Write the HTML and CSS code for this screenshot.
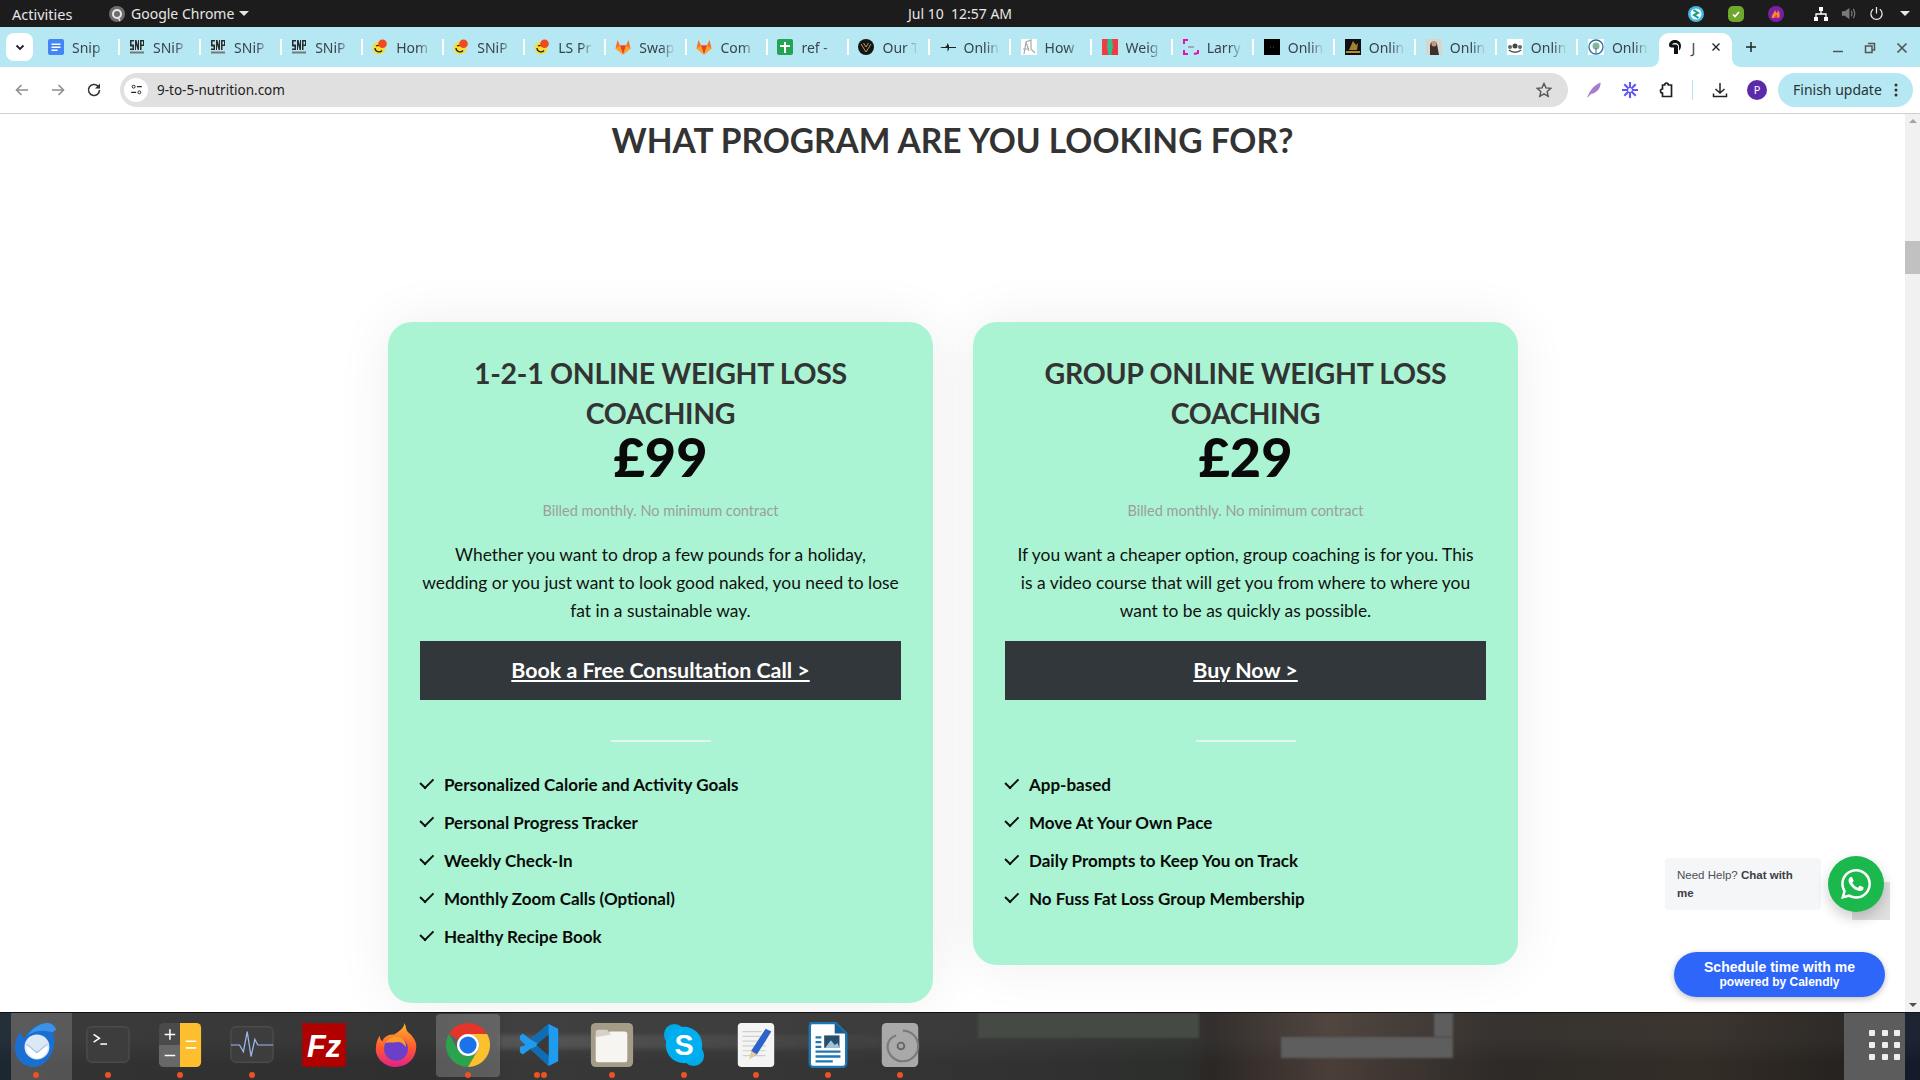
FILE: index.html
```html
<!DOCTYPE html>
<html lang="en">
<head>
<meta charset="utf-8">
<title>9 to 5 Nutrition</title>
<link rel="stylesheet" href="styles.css">
</head>
<body>
<svg class="sprite" width="0" height="0" aria-hidden="true">
  <symbol id="f-snip" viewBox="0 0 16 16"><rect width="16" height="16" fill="none"/><path d="M1 1h4v1.500H2.500v3H5V11H1V9.500h2.500v-2H1zM6 1h1.500l1.500 5V1h1v10H8.700L7 6v5H6zM11 1h4v6h-2.500v4H11zM12.500 2.500v3H14v-3z" fill="#2b2b2b"/><rect x="1" y="12.500" width="14" height="2" fill="#777"/></symbol>
  <symbol id="f-ls" viewBox="0 0 16 16"><circle cx="7" cy="9" r="6.500" fill="#f7dc3a"/><path d="M3 9a4 4 0 0 0 7 2.500M4 7c2-1 5-1 6 1" fill="none" stroke="#222" stroke-width="1.300"/><circle cx="10.500" cy="4.800" r="4.300" fill="#f2491e"/></symbol>
  <symbol id="f-gitlab" viewBox="0 0 16 16"><path d="M8 15.500 .5 9.500 2.500 1 5 6.500h6L13.500 1l2 8.500z" fill="#fc6d26"/><path d="M8 15.500 5 6.500h6z" fill="#e24329"/><path d="M8 15.500 .5 9.500 5 6.500zM8 15.500l7.500-6-4.500-3z" fill="#fca326"/></symbol>
  <symbol id="f-online" viewBox="0 0 16 16"><path d="M0 8h5l2-1.500V4l2 2.500V8h7v1H9v1.500l-1.500 2V9H5L2 9z" fill="#222"/></symbol>
</svg>

<div class="screen">
  <header class="topbar">
    <div class="top-left">
      <span class="activities">Activities</span>
      <svg class="app-glyph" viewBox="0 0 16 16"><circle cx="8" cy="8" r="8" fill="#6d6d6d"/><circle cx="8" cy="8" r="4" fill="none" stroke="#e8e8e8" stroke-width="2"/><path d="M9 11l2 4" stroke="#e8e8e8" stroke-width="1.500"/></svg>
      <span class="app-name">Google Chrome</span>
      <span class="caret"></span>
    </div>
    <div class="clock">Jul 10&nbsp;&nbsp;12:57 AM</div>
    <div class="tray">
      <svg class="tray-app" viewBox="0 0 16 16"><circle cx="8" cy="8" r="8" fill="#3fb6e8"/><circle cx="8" cy="8" r="5.500" fill="#fff"/><path d="M5.500 4 10 7 6 9l4.500 3" fill="none" stroke="#12a08a" stroke-width="2"/></svg>
      <svg class="tray-app" viewBox="0 0 16 16"><rect width="16" height="16" rx="5" fill="#6fa82c"/><path d="M5 8.500l2 2 4-4.500" fill="none" stroke="#fff" stroke-width="1.700"/></svg>
      <svg class="tray-app" viewBox="0 0 16 16"><circle cx="8" cy="8" r="8" fill="#7d1fa5"/><path d="M4 12c-1-3 2-4 3-8 1 2 1 3 2 3l1-3c2 3 2 6 1 8z" fill="#f2902a"/><path d="M6 12c0-2 2-2 2-4 1 1 2 2 2 4z" fill="#f23a6a"/></svg>
      <svg class="tray-net" viewBox="0 0 16 16"><path d="M6 1h4v4H6zM1 11h4v4H1zM11 11h4v4h-4z" fill="#fff"/><path d="M8 5v3M3 11V8h10v3" fill="none" stroke="#fff" stroke-width="1.300"/></svg>
      <svg class="tray-vol" viewBox="0 0 16 16"><path d="M1 5.500h3L9 2v12L4 10.500H1z" fill="#7a7a7a"/><path d="M11 5c1 2 1 4 0 6M13 3c2 3 2 7 0 10" fill="none" stroke="#7a7a7a" stroke-width="1.300"/></svg>
      <svg class="tray-pow" viewBox="0 0 16 16"><path d="M8 1v7M4.500 3.500a6 6 0 1 0 7 0" fill="none" stroke="#eee" stroke-width="1.300"/></svg>
      <span class="caret caret-tray"></span>
    </div>
  </header>

  <div class="tabstrip">
    <button class="tab-search"><svg viewBox="0 0 12 12"><path d="M2.500 4.500 6 8l3.500-3.500" fill="none" stroke="#222" stroke-width="1.800"/></svg></button>
    <div class="tabs">
      <div class="tab"><svg class="fav" viewBox="0 0 16 16"><rect width="16" height="16" rx="2" fill="#4285f4"/><path d="M3.500 4.500h9v1.500h-9zM3.500 7.500h9V9h-9zM3.500 10.500h6V12h-6z" fill="#fff"/></svg><span class="tab-label">Snip</span></div>
      <div class="tab"><svg class="fav"><use href="#f-snip"/></svg><span class="tab-label">SNiP</span></div>
      <div class="tab"><svg class="fav"><use href="#f-snip"/></svg><span class="tab-label">SNiP</span></div>
      <div class="tab"><svg class="fav"><use href="#f-snip"/></svg><span class="tab-label">SNiP</span></div>
      <div class="tab"><svg class="fav"><use href="#f-ls"/></svg><span class="tab-label">Hom</span></div>
      <div class="tab"><svg class="fav"><use href="#f-ls"/></svg><span class="tab-label">SNiP</span></div>
      <div class="tab"><svg class="fav"><use href="#f-ls"/></svg><span class="tab-label">LS Pr</span></div>
      <div class="tab"><svg class="fav"><use href="#f-gitlab"/></svg><span class="tab-label">Swap</span></div>
      <div class="tab"><svg class="fav"><use href="#f-gitlab"/></svg><span class="tab-label">Com</span></div>
      <div class="tab"><svg class="fav" viewBox="0 0 16 16"><rect width="16" height="16" rx="2" fill="#23a455"/><path d="M7 3h2v3h4v2H9v6H7V8H3V6h4z" fill="#fff"/></svg><span class="tab-label">ref -</span></div>
      <div class="tab"><svg class="fav" viewBox="0 0 16 16"><circle cx="8" cy="8" r="8" fill="#151515"/><path d="M3 5l5 8 5-8M5.500 4 8 8l2.500-4" fill="none" stroke="#b89a5a" stroke-width="1"/></svg><span class="tab-label">Our T</span></div>
      <div class="tab"><svg class="fav"><use href="#f-online"/></svg><span class="tab-label">Onlin</span></div>
      <div class="tab"><svg class="fav" viewBox="0 0 16 16"><rect width="16" height="16" fill="#fff"/><path d="M3 15 5 3l5-2v9l4 4M5 3l3 9M2 10h6" fill="none" stroke="#aaa" stroke-width="1.200"/></svg><span class="tab-label">How</span></div>
      <div class="tab"><svg class="fav" viewBox="0 0 16 16"><rect width="16" height="16" fill="#ee3b44"/><path d="M6 0h4l1 7-1.500 9h-3L5 7z" fill="#2fc08a"/></svg><span class="tab-label">Weig</span></div>
      <div class="tab"><svg class="fav" viewBox="0 0 16 16"><path d="M5 1H1v4M1 11v4h4M15 11v3l-4 1" fill="none" stroke="#e414b4" stroke-width="2"/><path d="M5 8h6" stroke="#9ab" stroke-width="2"/></svg><span class="tab-label">Larry</span></div>
      <div class="tab"><svg class="fav" viewBox="0 0 16 16"><rect width="16" height="16" fill="#000"/><path d="M6 8h1M9 8h1" stroke="#555"/></svg><span class="tab-label">Onlin</span></div>
      <div class="tab"><svg class="fav" viewBox="0 0 16 16"><rect width="16" height="16" fill="#111"/><path d="M4 11 8 2l3 4 2-2-1 7z" fill="#a5812f"/><rect x="1" y="12" width="14" height="2" fill="#b38d35"/></svg><span class="tab-label">Onlin</span></div>
      <div class="tab"><svg class="fav" viewBox="0 0 16 16"><rect width="16" height="16" fill="#d8d5cf"/><path d="M4 16V7c0-5 6-6 7-2l2 11z" fill="#3b302c"/><circle cx="8" cy="5" r="2.500" fill="#c59a80"/></svg><span class="tab-label">Onlin</span></div>
      <div class="tab"><svg class="fav" viewBox="0 0 16 16"><rect width="16" height="16" fill="#fff"/><circle cx="8" cy="7" r="2.500" fill="#444"/><circle cx="3" cy="8" r="2" fill="#666"/><circle cx="13" cy="8" r="2" fill="#666"/><path d="M2 11c3 3 9 3 12 0" fill="none" stroke="#555" stroke-width="1.500"/></svg><span class="tab-label">Onlin</span></div>
      <div class="tab tab-last"><svg class="fav" viewBox="0 0 16 16"><rect width="16" height="16" fill="#fff"/><circle cx="8" cy="8" r="7" fill="none" stroke="#2e6f9e" stroke-width="1.300"/><circle cx="8" cy="7" r="3.500" fill="#7fb59a"/><path d="M8 9v5" stroke="#2e6f9e"/></svg><span class="tab-label">Onlin</span></div>
      <div class="tab-active">
        <svg class="fav" viewBox="0 0 16 16"><path d="M7 15V8.500H4.500C3 8.500 2 7.500 2 6c0-3 3-5 6-5 3.500 0 6 2.500 6 6 0 2-1 3.500-2 4.500V8c0-2.500-1.500-4-4-4-1.500 0-3 .8-3 1.500h4c1 0 2 1 2 2V15z" fill="#111"/></svg>
        <span class="tab-label tab-label-active">J</span>
        <svg class="tab-close" viewBox="0 0 10 10"><path d="M1.500 1.500l7 7M8.500 1.500l-7 7" stroke="#222" stroke-width="1.300"/></svg>
      </div>
    </div>
    <svg class="newtab" viewBox="0 0 12 12"><path d="M6 1v10M1 6h10" stroke="#222" stroke-width="1.500"/></svg>
    <div class="winctl">
      <svg viewBox="0 0 12 12"><path d="M1 9.500h10" stroke="#555" stroke-width="1.500"/></svg>
      <svg viewBox="0 0 12 12"><path d="M4 1.500h6.500V8H8M1.500 4H8v6.500H1.500z" fill="none" stroke="#555" stroke-width="1.500"/></svg>
      <svg viewBox="0 0 12 12"><path d="M1.500 1.500l9 9M10.500 1.500l-9 9" stroke="#555" stroke-width="1.700"/></svg>
    </div>
  </div>

  <div class="toolbar">
    <svg class="nav nav-back" viewBox="0 0 16 16"><path d="M14 8H3M7.500 3 2.500 8l5 5" fill="none" stroke="#8f8f8f" stroke-width="1.600"/></svg>
    <svg class="nav" viewBox="0 0 16 16"><path d="M2 8h11M8.500 3l5 5-5 5" fill="none" stroke="#8f8f8f" stroke-width="1.600"/></svg>
    <svg class="nav" viewBox="0 0 16 16"><path d="M13.500 8a5.500 5.500 0 1 1-1.600-3.900L13.500 6" fill="none" stroke="#333" stroke-width="1.600"/><path d="M14 1.500V6.500H9z" fill="#333"/></svg>
    <div class="omnibox">
      <span class="site-info"><svg viewBox="0 0 16 16"><circle cx="4.500" cy="4.500" r="1.800" fill="none" stroke="#222" stroke-width="1.200"/><path d="M8.500 4.500h6M1.500 11.500h6" stroke="#222" stroke-width="1.400"/><circle cx="11.500" cy="11.500" r="1.800" fill="none" stroke="#222" stroke-width="1.200"/></svg></span>
      <span class="url">9-to-5-nutrition.com</span>
      <svg class="star" viewBox="0 0 16 16"><path d="M8 1.500l2 4.400 4.700.5-3.500 3.200 1 4.700L8 11.900l-4.200 2.400 1-4.700L1.300 6.400 6 5.900z" fill="none" stroke="#555" stroke-width="1.400"/></svg>
    </div>
    <svg class="ext ext-first" viewBox="0 0 16 16"><path d="M1 16C3 11 6 4 14.500 .5 15 6 11 11 5 12l-3 3z" fill="#a97cd0"/></svg>
    <svg class="ext" viewBox="0 0 16 16"><g stroke="#5f56f5" stroke-width="2.100"><path d="M8 0v16M0 8h16M2.300 2.300l11.400 11.400M13.700 2.300 2.300 13.700"/></g><circle cx="8" cy="8" r="2.500" fill="#fff" stroke="#5f56f5" stroke-width="1.200"/></svg>
    <svg class="ext" viewBox="0 0 16 16"><path d="M4.500 3h2.200a1.800 1.800 0 0 1 3.600 0h3.200v11.500h-9V11a2 2 0 0 1 0-4z" fill="none" stroke="#222" stroke-width="1.700"/></svg>
    <span class="tool-sep"></span>
    <svg class="ext ext-dl" viewBox="0 0 16 16"><path d="M8 1v10M3.500 7 8 11l4.500-4M1.500 11.500v3h13v-3" fill="none" stroke="#222" stroke-width="1.500"/></svg>
    <span class="avatar">P</span>
    <div class="update"><span>Finish update</span><svg viewBox="0 0 4 16"><circle cx="2" cy="3" r="1.500" fill="#333"/><circle cx="2" cy="8" r="1.500" fill="#333"/><circle cx="2" cy="13" r="1.500" fill="#333"/></svg></div>
  </div>

  <div class="viewport">
    <main class="page">
      <h2 class="page-title">WHAT PROGRAM ARE YOU LOOKING FOR?</h2>
      <div class="cards">
        <section class="card">
          <h3 class="card-title">1-2-1 ONLINE WEIGHT LOSS COACHING</h3>
          <div class="price">£99</div>
          <p class="billed">Billed monthly. No minimum contract</p>
          <p class="blurb">Whether you want to drop a few pounds for a holiday,<br>wedding or you just want to look good naked, you need to lose<br>fat in a sustainable way.</p>
          <a class="cta" href="#">Book a Free Consultation Call &gt;</a>
          <hr class="rule">
          <ul class="features">
            <li>Personalized Calorie and Activity Goals</li>
            <li>Personal Progress Tracker</li>
            <li>Weekly Check-In</li>
            <li>Monthly Zoom Calls (Optional)</li>
            <li>Healthy Recipe Book</li>
          </ul>
        </section>
        <section class="card">
          <h3 class="card-title">GROUP ONLINE WEIGHT LOSS COACHING</h3>
          <div class="price">£29</div>
          <p class="billed">Billed monthly. No minimum contract</p>
          <p class="blurb">If you want a cheaper option, group coaching is for you. This<br>is a video course that will get you from where to where you<br>want to be as quickly as possible.</p>
          <a class="cta" href="#">Buy Now &gt;</a>
          <hr class="rule">
          <ul class="features">
            <li>App-based</li>
            <li>Move At Your Own Pace</li>
            <li>Daily Prompts to Keep You on Track</li>
            <li>No Fuss Fat Loss Group Membership</li>
          </ul>
        </section>
      </div>
      <div class="help">Need Help? <b>Chat with</b><br><b>me</b></div>
      <div class="wa-square"></div>
      <div class="wa"><svg viewBox="0 0 24 24"><path fill="#fff" d="M17.472 14.382c-.297-.149-1.758-.867-2.03-.967-.273-.099-.471-.148-.67.15-.197.297-.767.966-.94 1.164-.173.199-.347.223-.644.075-.297-.15-1.255-.463-2.39-1.475-.883-.788-1.48-1.761-1.653-2.059-.173-.297-.018-.458.13-.606.134-.133.298-.347.446-.52.149-.174.198-.298.298-.497.099-.198.05-.371-.025-.52-.075-.149-.669-1.612-.916-2.207-.242-.579-.487-.5-.669-.51-.173-.008-.371-.01-.57-.01-.198 0-.52.074-.792.372-.272.297-1.04 1.016-1.04 2.479 0 1.462 1.065 2.875 1.213 3.074.149.198 2.096 3.2 5.077 4.487.709.306 1.262.489 1.694.625.712.227 1.36.195 1.871.118.571-.085 1.758-.719 2.006-1.413.248-.694.248-1.289.173-1.413-.074-.124-.272-.198-.57-.347m-5.421 7.403h-.004a9.87 9.87 0 01-5.031-1.378l-.361-.214-3.741.982.998-3.648-.235-.374a9.86 9.86 0 01-1.51-5.26c.001-5.45 4.436-9.884 9.888-9.884 2.64 0 5.122 1.03 6.988 2.898a9.825 9.825 0 012.893 6.994c-.003 5.45-4.437 9.884-9.885 9.884m8.413-18.297A11.815 11.815 0 0012.05 0C5.495 0 .16 5.335.157 11.892c0 2.096.547 4.142 1.588 5.945L.057 24l6.305-1.654a11.882 11.882 0 005.683 1.448h.005c6.554 0 11.89-5.335 11.893-11.893a11.821 11.821 0 00-3.48-8.413z"/></svg></div>
      <div class="calendly"><strong>Schedule time with me</strong><span>powered by Calendly</span></div>
    </main>
    <aside class="scrollbar">
      <span class="sb-arrow sb-up"></span>
      <span class="sb-track"><span class="sb-thumb"></span></span>
      <span class="sb-arrow sb-down"></span>
    </aside>
  </div>

  <footer class="dock">
    <div class="wall wall-l"></div>
    <div class="wall wall-top"></div>
    <div class="wall wall-h"></div>
    <div class="wall wall-v"></div>
    <div class="dock-item is-first">
      <svg class="dock-icon" viewBox="0 0 48 48"><path d="M36 1c4 0 8 3 9 7l-4 3c3 6 3 14 0 20-4 9-10 15-18 16C10 47 2 38 2 27c0-7 3-13 6-17 0 4 2 6 4 7C15 9 26 1 36 1z" fill="#1a6fd0"/><path d="M36 1c4 0 8 3 9 7l-4 3C34 8 24 8 15 14 20 7 28 1 36 1z" fill="#3a92ea"/><circle cx="25" cy="26" r="13" fill="#dbe9f6"/><path d="M14 22l11 9 11-9v7c-2 6-7 9-11 9s-9-3-11-9z" fill="#fff"/><path d="M14 23l11 9 11-9" fill="none" stroke="#a5c6e8" stroke-width="1.500"/></svg>
      <span class="dots"><i></i></span>
    </div>
    <div class="dock-item">
      <svg class="dock-icon" viewBox="0 0 48 48"><rect x="2" y="5" width="44" height="37" rx="5" fill="#3d3d3d" stroke="#555"/><path d="M9 13l6 4-6 4" fill="none" stroke="#fff" stroke-width="1.600"/><path d="M16 23h7" stroke="#fff" stroke-width="1.600"/></svg>
      <span class="dots"><i></i></span>
    </div>
    <div class="dock-item">
      <svg class="dock-icon" viewBox="0 0 48 48"><path d="M7 1h17v23H2V6a5 5 0 0 1 5-5z" fill="#4a4a4a"/><path d="M2 24h22v23H7a5 5 0 0 1-5-5z" fill="#676767"/><path d="M24 1h17a5 5 0 0 1 5 5v36a5 5 0 0 1-5 5H24z" fill="#fdbf2d"/><path d="M8 13h11M13.500 7.500v11M8 35h11M30 20h11M30 27h11" stroke="#fff" stroke-width="1.600"/></svg>
      <span class="dots"><i></i></span>
    </div>
    <div class="dock-item">
      <svg class="dock-icon" viewBox="0 0 48 48"><rect x="2" y="5" width="44" height="37" rx="5" fill="#3d3d3d" stroke="#555"/><path d="M2 24h9l4 7 4-21 4 26 4-18 3 6h16" fill="none" stroke="#9db8ee" stroke-width="1.300"/></svg>
      <span class="dots"><i></i></span>
    </div>
    <div class="dock-item">
      <svg class="dock-icon fz" viewBox="0 0 48 48"><rect x="2" y="2" width="44" height="44" fill="#b00000" stroke="#b00000" stroke-width="3" stroke-dasharray="3 3"/><text x="24" y="37" class="fz-text">Fz</text></svg>
      <span class="dots dots-none"></span>
    </div>
    <div class="dock-item">
      <svg class="dock-icon" viewBox="0 0 48 48"><defs><linearGradient id="ffx" x1="0" y1="0" x2="0" y2="1"><stop offset="0" stop-color="#ffb52e"/><stop offset=".55" stop-color="#ff5a2c"/><stop offset="1" stop-color="#e3208a"/></linearGradient></defs><path d="M33 1c2 5 1 7 4 10 6 5 9 11 8 17-1 11-10 19-21 19S2 38 3 27c0-5 2-10 4-13 0 3 1 5 3 6 1-5 7-7 12-7 5-3 10-6 11-12z" fill="url(#ffx)"/><circle cx="24" cy="28" r="12.500" fill="#6b3fc9"/><path d="M13 22c3-6 10-8 15-6 5 2 7 6 6 10-2-4-6-6-10-5-4 1-7 0-11 1z" fill="#ff9a2a"/></svg>
      <span class="dots dots-none"></span>
    </div>
    <div class="dock-item is-active">
      <svg class="dock-icon" viewBox="0 0 48 48"><path d="M24 1A23 23 0 0 1 43.900 12.500H24a11.500 11.500 0 0 0-10 5.750L4.100 12.500A23 23 0 0 1 24 1z" fill="#e5352b"/><path d="M4.100 12.500A23 23 0 0 0 24 47l9.960-17.250a11.500 11.500 0 0 1-19.920 0z" fill="#2ba24c"/><path d="M43.900 12.500A23 23 0 0 1 24 47l9.960-17.250A11.500 11.500 0 0 0 24 12.500z" fill="#fbc02d"/><circle cx="24" cy="24" r="11.500" fill="#fff"/><circle cx="24" cy="24" r="9" fill="#1a73e8"/></svg>
      <span class="dots"><i></i></span>
    </div>
    <div class="dock-item">
      <svg class="dock-icon" viewBox="0 0 48 48"><path d="M33 2 43 7v34l-10 5-19-18-8 6-3-2.500V26l6-2-6-5.500v-4L6 12l8 6z" fill="#1f9cf0"/><path d="M33 2v44l-19-18 10-4-10-6z" fill="#0f6db5"/><path d="M33 13 20 24l13 11z" fill="#3a3a3a"/></svg>
      <span class="dots"><i></i><i></i></span>
    </div>
    <div class="dock-item">
      <svg class="dock-icon" viewBox="0 0 48 48"><rect x="2" y="1" width="44" height="46" rx="5" fill="#a59c87"/><path d="M7 16a3 3 0 0 1 3-3h9l3-3h15a3 3 0 0 1 3 3v26a3 3 0 0 1-3 3H10a3 3 0 0 1-3-3z" fill="#f6f5f2"/><path d="M7 16v-5a3 3 0 0 1 3-3h9l4 5z" fill="#d6d2c8"/></svg>
      <span class="dots"><i></i></span>
    </div>
    <div class="dock-item">
      <svg class="dock-icon" viewBox="0 0 48 48"><circle cx="14" cy="13" r="11" fill="#00a9e8"/><circle cx="34" cy="35" r="11" fill="#00a9e8"/><circle cx="24" cy="24" r="19" fill="#00aff0"/><text x="24" y="34" class="skype-text">S</text></svg>
      <span class="dots"><i></i></span>
    </div>
    <div class="dock-item">
      <svg class="dock-icon" viewBox="0 0 48 48"><rect x="5" y="1" width="38" height="46" rx="4" fill="#f4f4f4"/><path d="M10 10h20M10 15h20M10 20h24M10 25h24M10 30h24M10 35h24" stroke="#cfcfcf" stroke-width="1.300"/><path d="M34 7l6 3-15 24-6 3 0-7z" fill="#2c63c9"/><path d="M19 30l6 4-8 5z" fill="#e7c79a"/></svg>
      <span class="dots"><i></i></span>
    </div>
    <div class="dock-item">
      <svg class="dock-icon" viewBox="0 0 48 48"><path d="M6 1h26l11 11v31a4 4 0 0 1-4 4H9a4 4 0 0 1-4-4V4z" fill="#fff" stroke="#1c77b4" stroke-width="2.500"/><path d="M31 1l12 11H31z" fill="#1c5f8f"/><rect x="20" y="14" width="16" height="13" fill="#274e6e"/><path d="M21 27l6-8 4 5 3-2 2 5z" fill="#9cc3da"/><path d="M11 16h6M11 21h6M11 26h6M11 31h26M11 36h26M11 41h18" stroke="#1c77b4" stroke-width="2.400"/></svg>
      <span class="dots"><i></i></span>
    </div>
    <div class="dock-item">
      <svg class="dock-icon" viewBox="0 0 48 48"><rect x="5" y="1" width="38" height="46" rx="5" fill="#a9a9a9"/><circle cx="25" cy="25" r="3.500" fill="none" stroke="#666" stroke-width="2"/><path d="M27 9a16 16 0 1 1-16 17c0-6 4-11 9-12" fill="none" stroke="#7a7a7a" stroke-width="2.200"/></svg>
      <span class="dots"><i></i></span>
    </div>
    <div class="show-apps">
      <span class="grid-apps"><i></i><i></i><i></i><i></i><i></i><i></i><i></i><i></i><i></i></span>
    </div>
  </footer>
</div>
</body>
</html>
```

FILE: styles.css
```css
* { box-sizing: border-box; }
html, body { margin: 0; padding: 0; height: 100%; overflow: hidden; }
body { font-family: "Noto Sans", sans-serif; background: #fff; }
.sprite { position: absolute; }
.screen { width: 1920px; height: 1080px; display: flex; flex-direction: column; }

/* GNOME top bar */
.topbar { height: 27px; flex: none; background: #1c1c1c; color: #e6e6e6; font-size: 14.500px; display: grid; grid-template-columns: 1fr auto 1fr; align-items: center; }
.top-left { display: flex; align-items: center; padding-left: 12px; }
.activities { width: 97px; }
.app-glyph { width: 16px; height: 16px; margin-right: 6px; }
.app-name { width: 108px; white-space: nowrap; font-size: 14px; }
.caret { width: 0; height: 0; border-left: 5px solid transparent; border-right: 5px solid transparent; border-top: 5px solid #e6e6e6; }
.clock { font-size: 14px; color: #e8e8e8; }
.tray { display: flex; align-items: center; justify-content: flex-end; padding-right: 10px; }
.tray-app { width: 16px; height: 16px; margin-right: 24px; }
.tray-app:nth-child(3) { margin-right: 29px; }
.tray-net { width: 16px; height: 16px; margin-right: 12px; }
.tray-vol { width: 15px; height: 15px; margin-right: 13px; }
.tray-pow { width: 15px; height: 15px; margin-right: 16px; }

/* Tab strip */
.tabstrip { height: 40px; flex: none; background: #b5e8f2; display: flex; align-items: flex-end; position: relative; }
.tab-search { width: 27px; height: 28px; margin: 0 0 6px 6px; padding: 0; border: 0; background: #fff; border-radius: 8px; display: flex; align-items: center; justify-content: center; }
.tab-search svg { width: 12px; height: 12px; }
.tabs { display: flex; margin-left: 5.500px; align-items: flex-end; }
.tab { width: 81.050px; height: 34px; padding: 0 2px 6px 9.500px; display: flex; align-items: center; gap: 8px; flex: none; position: relative; }
.tab::after { content: ""; position: absolute; right: 0; top: 6px; width: 2px; height: 16px; background: #fff; }
.tab-last::after { display: none; }
.fav { width: 16px; height: 16px; flex: none; }
.tab-label { font-size: 14px; color: #39444a; width: 40px; white-space: nowrap; -webkit-mask-image: linear-gradient(90deg, #000 55%, transparent 90%); mask-image: linear-gradient(90deg, #000 55%, transparent 90%); }
.tab-active { width: 73px; height: 34px; background: #fff; border-radius: 10px 10px 0 0; display: flex; align-items: center; padding: 0 8px 6px 8px; gap: 8px; position: relative; flex: none; }
.tab-active::before, .tab-active::after { content: ""; position: absolute; bottom: 0; width: 8px; height: 8px; }
.tab-active::before { left: -8px; background: radial-gradient(circle at 0 0, #b5e8f2 7.500px, #fff 8px); }
.tab-active::after { right: -8px; background: radial-gradient(circle at 100% 0, #b5e8f2 7.500px, #fff 8px); }
.tab-label-active { width: 12px; flex: none; -webkit-mask-image: none; mask-image: none; }
.tab-close { width: 10px; height: 10px; flex: none; }
.newtab { width: 12px; height: 12px; margin: 0 0 14px 13px; flex: none; }
.winctl { margin-left: auto; margin-bottom: 13px; display: flex; gap: 20px; padding-right: 12px; }
.winctl svg { width: 12px; height: 12px; }

/* Toolbar */
.toolbar { height: 47px; flex: none; background: #fff; border-bottom: 1px solid #d0d0d0; display: flex; align-items: center; padding: 0 7px 1px 0; }
.nav { width: 16px; height: 16px; margin-right: 20px; flex: none; }
.nav-back { margin-left: 14px; }
.omnibox { width: 1448px; height: 34px; background: #e0e0e0; border-radius: 17px; margin-left: -2px; display: flex; align-items: center; padding: 0 16px 0 4px; flex: none; }
.site-info { width: 24px; height: 24px; background: #fff; border-radius: 50%; display: flex; align-items: center; justify-content: center; }
.site-info svg { width: 13px; height: 13px; }
.url { font-size: 13.500px; color: #202020; margin-left: 9px; }
.star { width: 16px; height: 16px; margin-left: auto; }
.ext { width: 16px; height: 16px; margin-right: 20px; flex: none; }
.ext-first { margin-left: 18px; }
.tool-sep { width: 1px; height: 20px; background: #b5e8f2; margin: 0 19px 0 -2px; flex: none; }
.ext-dl { margin-right: 19px; }
.avatar { width: 20px; height: 20px; border-radius: 50%; background: #5b2aa8; color: #fff; font-size: 11px; display: flex; align-items: center; justify-content: center; margin-right: 11px; flex: none; }
.update { width: 135px; height: 34px; background: #b5e8f2; border-radius: 17px; display: flex; align-items: center; justify-content: space-between; padding: 0 15px 0 15px; font-size: 14px; color: #2a3336; flex: none; white-space: nowrap; }
.update svg { width: 4px; height: 16px; }

/* Page */
.viewport { height: 898px; flex: none; display: flex; }
.page { width: 1905px; flex: none; position: relative; overflow: hidden; padding-top: 6px; font-family: Lato, sans-serif; background: #fff; }
.page-title { margin: 0 0 162px; font-size: 33.500px; line-height: 40px; font-weight: 700; color: #333; text-align: center; }
.cards { display: flex; justify-content: center; gap: 40px; align-items: flex-start; padding-left: 1px; }
.card { width: 545px; flex: none; background: #aaf4d3; border-radius: 24px; padding: 31px 32px 48px; box-shadow: 0 0 55px rgba(0,0,0,.07); text-align: center; }
.card-title { margin: 0; font-size: 28.500px; letter-spacing: -.3px; line-height: 40px; font-weight: 700; color: #333; padding: 0 28px; }
.price { font-size: 54px; line-height: 48px; font-weight: 900; color: #0a0a0a; }
.billed { margin: 18px 0 0; font-size: 14.500px; line-height: 24px; color: #9d9d9d; }
.blurb { margin: 18px 0 0; font-size: 17.400px; line-height: 28px; color: #111; white-space: nowrap; }
.cta { display: block; margin-top: 16px; height: 59px; line-height: 59px; background: #32373b; color: #fff; font-size: 21.400px; font-weight: 700; text-decoration: underline; }
.rule { width: 100px; height: 2px; margin: 40px auto 0; border: 0; background: #e4f6ee; }
.features { list-style: none; margin: 23px 0 0; padding: 0; text-align: left; }
.features li { height: 38px; display: flex; align-items: center; gap: 10px; font-size: 17px; font-weight: 700; color: #0a0a0a; }
.features li::before { content: ""; width: 11px; height: 6px; border-left: 2.700px solid #0a0a0a; border-bottom: 2.700px solid #0a0a0a; transform: rotate(-45deg) translate(1px, -2px); margin-left: 1px; flex: none; }

/* Floating widgets */
.help { position: absolute; left: 1665px; top: 744px; width: 156px; height: 52px; background: #f5f6f8; border-radius: 4px; padding: 8px 12px; font: 11.500px/18px "Liberation Sans", sans-serif; color: #4a4f57; }
.help b { color: #3a3f47; }
.wa-square { position: absolute; left: 1852px; top: 768px; width: 38px; height: 38px; background: #e0e0e0; }
.wa { position: absolute; left: 1828px; top: 742px; width: 56px; height: 56px; border-radius: 50%; background: #1bb84d; box-shadow: 0 6px 14px rgba(0,0,0,.2); display: flex; align-items: center; justify-content: center; }
.wa svg { width: 30px; height: 30px; }
.calendly { position: absolute; left: 1674px; top: 838px; width: 211px; height: 45px; border-radius: 23px; background: #2f66fa; color: #fff; font-family: "Liberation Sans", sans-serif; display: flex; flex-direction: column; align-items: center; justify-content: center; padding-bottom: 1px; box-shadow: 0 2px 6px rgba(0,0,0,.25); }
.calendly strong { font-size: 14px; line-height: 16px; }
.calendly span { font-size: 12px; line-height: 14px; font-weight: 700; }

/* Scrollbar */
.scrollbar { width: 15px; flex: none; background: #f1f1f1; display: flex; flex-direction: column; align-items: center; }
.sb-arrow { width: 0; height: 0; border-left: 4px solid transparent; border-right: 4px solid transparent; flex: none; }
.sb-up { border-bottom: 4px solid #a3a3a3; margin-top: 5px; }
.sb-down { border-top: 4px solid #505050; margin-bottom: 5px; }
.sb-track { flex: 1; width: 100%; padding-top: 118px; }
.sb-thumb { display: block; width: 100%; height: 33px; background: #c1c1c1; }

/* Dock */
.dock { height: 68px; flex: none; border-top: 1px solid #111; position: relative; display: flex; overflow: hidden; background:
  linear-gradient(180deg, rgba(255,255,255,.04) 0, rgba(255,255,255,.04) 25px, transparent 50px),
  linear-gradient(90deg, #1c2732 0, #1c2732 11px, #333 11px, #2f2f2f 430px, #383838 520px, #343434 900px, #2c2e2c 1190px, #2b2725 1210px, #4a3e38 1330px, #2d2a27 1500px, #332d27 1700px, #26221f 1844px, #141c2c 1905px); }
.wall { position: absolute; background: #5e5e5e; filter: blur(.8px); }
.wall-h { left: 1281px; top: 24px; width: 172px; height: 21px; }
.wall-v { left: 1434px; top: 0; width: 19px; height: 24px; }
.wall-l { left: 500px; top: 22px; width: 420px; height: 14px; background: linear-gradient(90deg, rgba(255,255,255,.12), rgba(255,255,255,.02)); filter: blur(2px); }
.wall-top { left: 978px; top: 0; width: 221px; height: 25px; background: #454a45; }
.dock-item { width: 72px; flex: none; display: flex; flex-direction: column; align-items: center; padding-top: 9px; position: relative; }
.dock-item.is-first { background: linear-gradient(90deg, transparent 11px, rgba(255,255,255,.16) 11px); }
.dock-item.is-active::before { content: ""; position: absolute; left: 4px; top: 1px; width: 64px; height: 63px; border-radius: 4px; background: rgba(255,255,255,.2); }
.dock-icon { width: 46px; height: 46px; position: relative; }
.dots { display: flex; gap: 1px; height: 6px; margin-top: 4px; position: relative; }
.dots i { width: 6px; height: 6px; border-radius: 50%; background: #e95420; }
.fz-text { font: italic 700 32px "Liberation Sans", sans-serif; fill: #fff; text-anchor: middle; }
.skype-text { font: 700 30px "Liberation Sans", sans-serif; fill: #fff; text-anchor: middle; }
.show-apps { margin-left: auto; margin-right: 15px; width: 61px; background: #5c5c5c; display: flex; align-items: center; justify-content: flex-end; padding-right: 5px; position: relative; }
.grid-apps { display: grid; grid-template-columns: repeat(3, 6px); gap: 6px 6.500px; padding-bottom: 3px; }
.grid-apps i { width: 6px; height: 6px; background: #eee; border-radius: 1px; }
```
